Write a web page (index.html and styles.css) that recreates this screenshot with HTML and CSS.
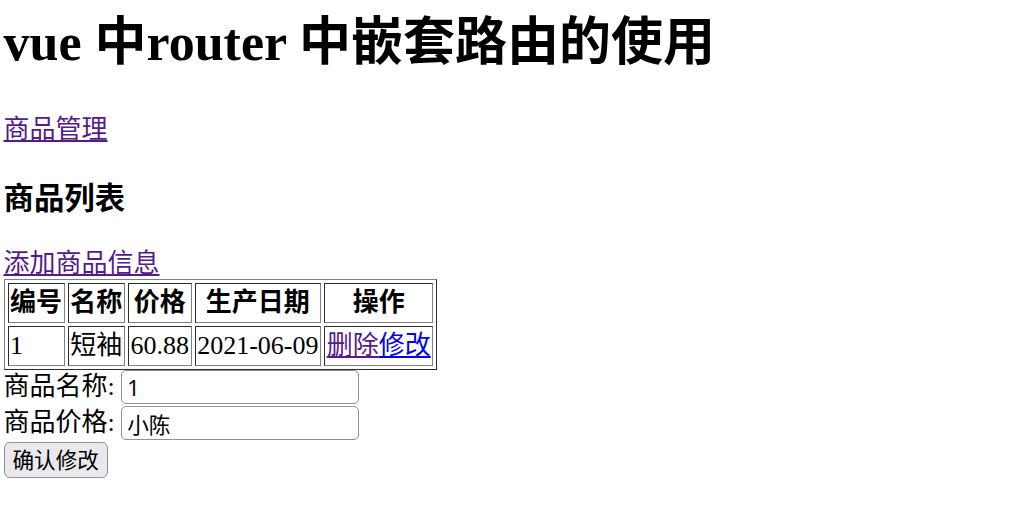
FILE: index.html
```html
<!DOCTYPE html>
<html lang="zh-CN">
<head>
<meta charset="utf-8">
<title>vue 中router 中嵌套路由的使用</title>
<link rel="stylesheet" href="styles.css">
</head>
<body>
<div class="app">
  <h1 class="title">vue 中router 中嵌套路由的使用</h1>
  <a class="link visited" href="#goods">商品管理</a>
  <div class="goods">
    <h3 class="subtitle">商品列表</h3>
    <a class="link visited" href="#add">添加商品信息</a>
    <table class="grid">
      <thead>
        <tr><th>编号</th><th>名称</th><th>价格</th><th>生产日期</th><th>操作</th></tr>
      </thead>
      <tbody>
        <tr><td>1</td><td>短袖</td><td>60.88</td><td>2021-06-09</td><td><a class="link visited" href="#del">删除</a><a class="link" href="#edit">修改</a></td></tr>
      </tbody>
    </table>
    <div class="form">
      <div class="row">商品名称: <input class="field" type="text" value="1"></div>
      <div class="row">商品价格: <input class="field" type="text" value="小陈"></div>
      <button class="btn" type="button">确认修改</button>
    </div>
  </div>
</div>
</body>
</html>
```

FILE: styles.css
```css
html, body {
  margin: 0;
  padding: 0;
  background: #fff;
}
body {
  font-family: "Liberation Serif", "Noto Sans CJK SC", serif;
  font-size: 26px;
  color: #000;
}
.app {
  padding: 0 3.5px;
}
.title {
  font-size: 52px;
  font-weight: bold;
  margin: 0 0 33px;
  padding-top: 0;
}
.link {
  color: #0000ee;
  text-decoration: underline;
}
.link.visited {
  color: #551a8b;
}
.subtitle {
  font-size: 30.4px;
  font-weight: bold;
  margin: 29px 0 24px;
}
.grid {
  border: 1.6px outset #808080;
  border-spacing: 3px;
  border-collapse: separate;
  margin-top: 0;
}
.grid th, .grid td {
  border: 1.6px inset #808080;
  padding: 1.6px;
  line-height: 34.8px;
}
.grid th {
  font-weight: bold;
  text-align: center;
}
.grid td {
  text-align: left;
}
.form {
  margin-top: 0;
}
.row {
  display: block;
  line-height: 34px;
  height: 36px;
}
.field {
  font-family: "Noto Sans", "Noto Sans CJK SC", sans-serif;
  font-size: 21.6px;
  width: 238px;
  height: 34.5px;
  box-sizing: border-box;
  padding: 0 5px;
  border: 1.6px solid #8f8f9d;
  border-radius: 5px;
  margin: 0;
  vertical-align: top;
}
.btn {
  display: block;
  font-family: "Noto Sans", "Noto Sans CJK SC", sans-serif;
  font-size: 21.6px;
  line-height: 30px;
  height: 36.5px;
  padding: 0 8px;
  border: 1.6px solid #8f8f9d;
  border-radius: 6px;
  background: #e9e9ed;
  color: #000;
  margin: 0;
}
```
